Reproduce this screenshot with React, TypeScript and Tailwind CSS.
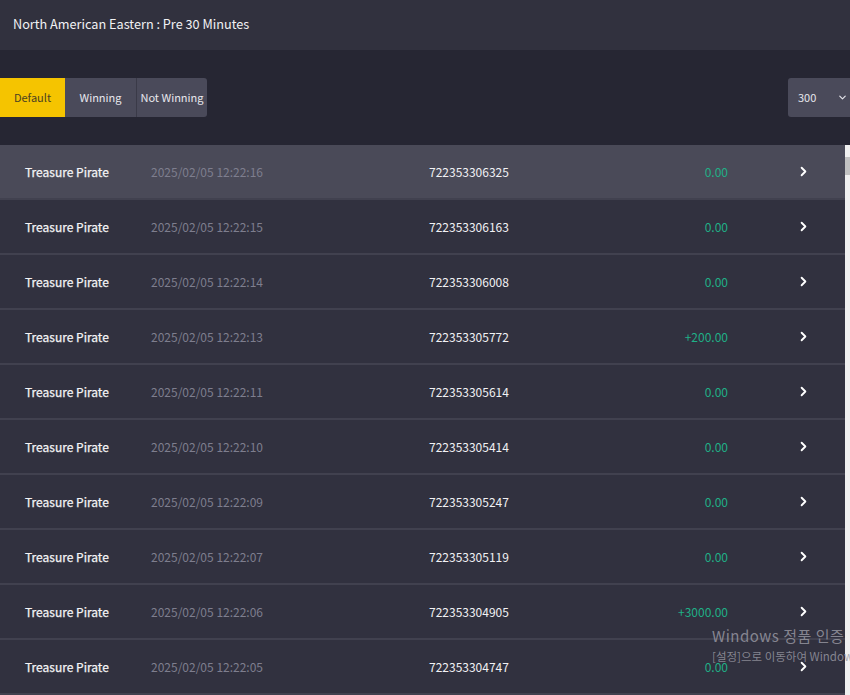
import { ChevronDown, ChevronRight } from "lucide-react";

type Bet = {
  game: string;
  time: string;
  id: string;
  amount: string;
};

const bets: Bet[] = [
  { game: "Treasure Pirate", time: "2025/02/05 12:22:16", id: "722353306325", amount: "0.00" },
  { game: "Treasure Pirate", time: "2025/02/05 12:22:15", id: "722353306163", amount: "0.00" },
  { game: "Treasure Pirate", time: "2025/02/05 12:22:14", id: "722353306008", amount: "0.00" },
  { game: "Treasure Pirate", time: "2025/02/05 12:22:13", id: "722353305772", amount: "+200.00" },
  { game: "Treasure Pirate", time: "2025/02/05 12:22:11", id: "722353305614", amount: "0.00" },
  { game: "Treasure Pirate", time: "2025/02/05 12:22:10", id: "722353305414", amount: "0.00" },
  { game: "Treasure Pirate", time: "2025/02/05 12:22:09", id: "722353305247", amount: "0.00" },
  { game: "Treasure Pirate", time: "2025/02/05 12:22:07", id: "722353305119", amount: "0.00" },
  { game: "Treasure Pirate", time: "2025/02/05 12:22:06", id: "722353304905", amount: "+3000.00" },
  { game: "Treasure Pirate", time: "2025/02/05 12:22:05", id: "722353304747", amount: "0.00" },
];

const filters = ["Default", "Winning", "Not Winning"];

export default function App() {
  return (
    <div className="relative h-[695px] w-[850px] overflow-hidden bg-[#262633] font-['Noto_Sans_CJK_KR','Noto_Sans',sans-serif]">
      <header className="flex h-[50px] items-center bg-[#31313e] px-[13px] pb-[3px] text-[12.7px] text-[#f1f1f4]">
        North American Eastern : Pre 30 Minutes
      </header>

      <div className="flex h-[95px] items-center justify-between">
        <div className="flex h-[39px]">
          {filters.map((label, i) => (
            <button
              key={label}
              className={
                i === 0
                  ? "w-[65px] bg-[#f5c400] text-[11px] text-[#4b4222]"
                  : i === 1
                    ? "w-[72px] border-r border-[#3a3a48] bg-[#4a4a5a] text-[11px] text-[#e6e6ec]"
                    : "w-[70px] rounded-r-[3px] bg-[#4a4a5a] text-[11px] text-[#e6e6ec]"
              }
            >
              {label}
            </button>
          ))}
        </div>
        <div className="flex h-[39px] w-[62px] items-center justify-between rounded-l-[3px] bg-[#4a4a5a] pl-[10px] pr-[2px] text-[11px] text-[#e6e6ec]">
          <span>300</span>
          <ChevronDown className="size-[11px]" strokeWidth={2.5} />
        </div>
      </div>

      <div className="flex">
        <ul className="flex-1">
          {bets.map((bet, i) => (
            <li
              key={bet.id}
              className={
                "flex h-[55px] items-center border-b-2 border-[#41414f] text-[12px] " +
                (i === 0 ? "bg-[#4a4a58]" : "bg-[#31313f]")
              }
            >
              <span className="w-[151px] pl-[25px] text-[#f4f4f6] [-webkit-text-stroke:0.25px_#f4f4f6]">{bet.game}</span>
              <span className="w-[278px] text-[#7e7e8e]">{bet.time}</span>
              <span className="w-[180px] text-[#f1f1f4]">{bet.id}</span>
              <span className="w-[119px] text-right text-[#1fb087]">{bet.amount}</span>
              <span className="flex flex-1 pl-[68px]">
                <ChevronRight className="size-[15px] text-white" strokeWidth={3} />
              </span>
            </li>
          ))}
        </ul>
        <div className="w-[5px] bg-[#f0f0f0] pt-[12px]">
          <div className="h-[18px] bg-[#c2c2c2]" />
        </div>
      </div>

      <div className="pointer-events-none absolute left-[712px] top-[625px] whitespace-nowrap text-[#9c9ca6]/80">
        <div className="text-[15px] tracking-[0.5px]">Windows 정품 인증</div>
        <div className="text-[11.5px]">[설정]으로 이동하여 Windows를 정품 인증합니다.</div>
      </div>
    </div>
  );
}
